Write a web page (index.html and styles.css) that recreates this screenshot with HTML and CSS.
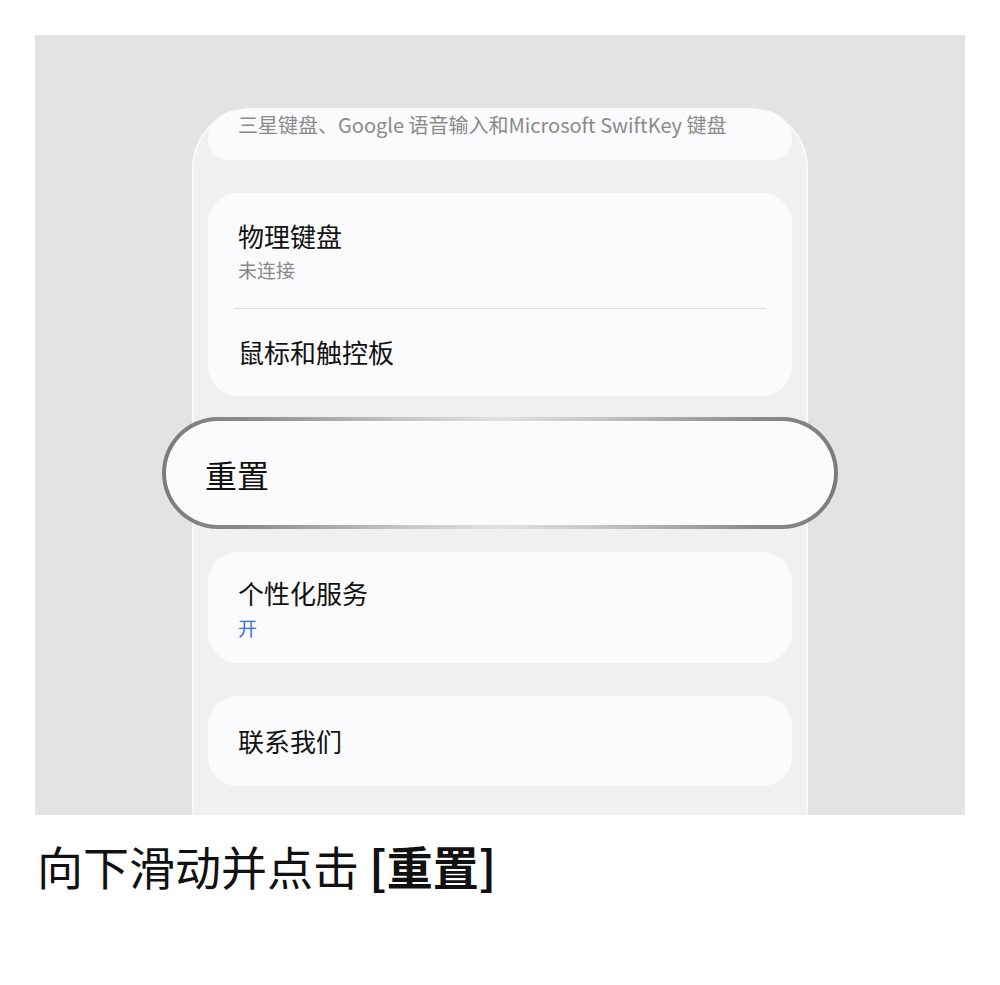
FILE: index.html
```html
<!DOCTYPE html>
<html lang="zh-CN">
<head>
<meta charset="utf-8">
<title>重置</title>
<link rel="stylesheet" href="styles.css">
</head>
<body>
<div class="stage">
  <div class="phone">
    <div class="card card-top">
      <div class="sub sub-top">三星键盘、Google 语音输入和Microsoft SwiftKey 键盘</div>
    </div>

    <div class="card">
      <div class="item item-first">
        <div class="title">物理键盘</div>
        <div class="sub">未连接</div>
      </div>
      <div class="divider"></div>
      <div class="item item-last">
        <div class="title">鼠标和触控板</div>
      </div>
    </div>

    <div class="pill">
      <div class="pill-title">重置</div>
    </div>

    <div class="card card-service">
      <div class="title">个性化服务</div>
      <div class="sub sub-on">开</div>
    </div>

    <div class="card card-contact">
      <div class="title">联系我们</div>
    </div>
  </div>
</div>
<p class="caption">向下滑动并点击 <b>[重置]</b></p>
</body>
</html>
```

FILE: styles.css
```css
* {
  box-sizing: border-box;
}

body {
  margin: 0;
  padding: 35px 35px 0;
  background: #ffffff;
  font-family: "Noto Sans CJK SC", "Noto Sans", sans-serif;
  color: #111111;
}

.stage {
  height: 780px;
  background: #e3e3e3;
  overflow: hidden;
  padding-top: 73px;
}

.phone {
  width: 616px;
  height: 720px;
  margin: 0 auto;
  background: #f0f0f2;
  border: 2px solid #f9f9f9;
  border-bottom: none;
  border-radius: 60px 60px 0 0;
  padding: 0 14px;
  display: flex;
  flex-direction: column;
}

.card {
  background: #fbfbfd;
  border-radius: 30px;
  padding: 0 30px;
  flex-shrink: 0;
}

.card-top {
  height: 50px;
  border-radius: 46px 46px 30px 30px;
  padding-top: 2px;
}

.card + .card,
.card-top + .card {
  margin-top: 33px;
}

.title {
  font-size: 26px;
  line-height: 32px;
  color: #111111;
}

.sub {
  font-size: 19px;
  line-height: 26px;
  color: #888888;
}

.sub-top {
  font-size: 20px;
  color: #8a8a8a;
  white-space: nowrap;
}

.item-first {
  padding: 27px 0 25px;
}

.item-first .sub {
  margin-top: 5px;
}

.divider {
  height: 1px;
  background: #dedee0;
  margin: 0 -4px;
}

.item-last {
  padding: 27px 0 28px;
}

.pill {
  flex-shrink: 0;
  margin: 21px -46px 0;
  height: 112px;
  border: 4px solid transparent;
  border-radius: 56px;
  background:
    linear-gradient(#fbfbfd, #fbfbfd) padding-box,
    linear-gradient(90deg, #7b7b7b 0%, #8a8a8a 12%, #c4c4c4 35%, #e2e2e2 50%, #c4c4c4 65%, #8a8a8a 88%, #7b7b7b 100%) border-box;
  display: flex;
  align-items: center;
  padding-left: 39px;
}

.pill-title {
  font-size: 32px;
  line-height: 40px;
  color: #111111;
  margin-top: 1px;
}

.card-service {
  margin-top: 23px;
  padding-top: 25px;
  padding-bottom: 22px;
}

.sub-on {
  margin-top: 6px;
  color: #3b6fd6;
}

.card-contact {
  padding-top: 29px;
  padding-bottom: 29px;
}

.caption {
  margin: 22px 0 0 2px;
  font-size: 46px;
  line-height: 56px;
  color: #111111;
  font-weight: 400;
}

.caption b {
  font-weight: 700;
}
```
